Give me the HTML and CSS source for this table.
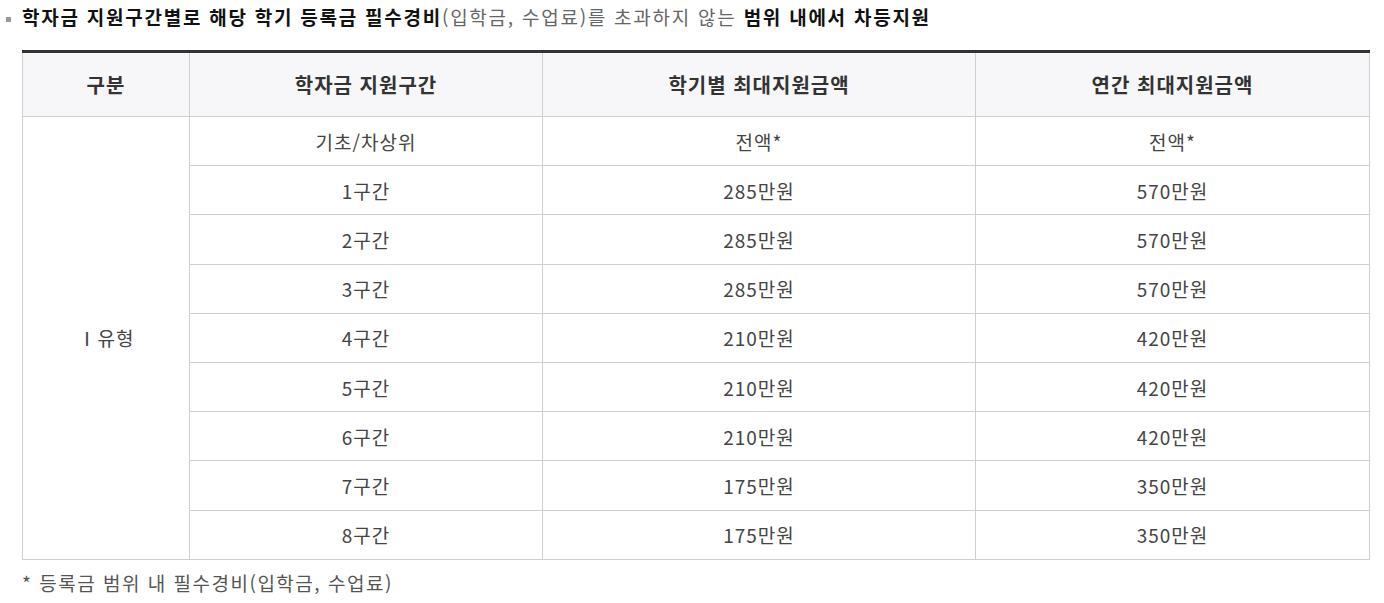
FILE: index.html
```html
<!DOCTYPE html>
<html lang="ko">
<head>
<meta charset="utf-8">
<link rel="stylesheet" href="styles.css">
</head>
<body>
<div class="page">
  <p class="title"><span class="bullet"></span><strong>학자금 지원구간별로 해당 학기 등록금 필수경비</strong>(입학금, 수업료)를 초과하지 않는 <strong>범위 내에서 차등지원</strong></p>
  <table class="tbl">
    <colgroup>
      <col class="c1"><col class="c2"><col class="c3"><col class="c4">
    </colgroup>
    <thead>
      <tr><th>구분</th><th>학자금 지원구간</th><th>학기별 최대지원금액</th><th>연간 최대지원금액</th></tr>
    </thead>
    <tbody>
      <tr><td rowspan="9">Ⅰ유형</td><td>기초/차상위</td><td>전액*</td><td>전액*</td></tr>
      <tr><td>1구간</td><td>285만원</td><td>570만원</td></tr>
      <tr><td>2구간</td><td>285만원</td><td>570만원</td></tr>
      <tr><td>3구간</td><td>285만원</td><td>570만원</td></tr>
      <tr><td>4구간</td><td>210만원</td><td>420만원</td></tr>
      <tr><td>5구간</td><td>210만원</td><td>420만원</td></tr>
      <tr><td>6구간</td><td>210만원</td><td>420만원</td></tr>
      <tr><td>7구간</td><td>175만원</td><td>350만원</td></tr>
      <tr><td>8구간</td><td>175만원</td><td>350만원</td></tr>
    </tbody>
  </table>
  <p class="note">* 등록금 범위 내 필수경비(입학금, 수업료)</p>
</div>
</body>
</html>
```

FILE: styles.css
```css
html, body {
  margin: 0;
  padding: 0;
  background: #fff;
}
body {
  font-family: "Noto Sans CJK KR", "Noto Sans", sans-serif;
  color: #444;
}
.page {
  padding: 4px 16px 0 22px;
}
.title {
  position: relative;
  margin: 0;
  font-size: 19px;
  letter-spacing: 1.75px;
  line-height: 26px;
  color: #666;
}
.title strong {
  color: #111;
  font-weight: 700;
}
.bullet {
  position: absolute;
  left: -16px;
  top: 13px;
  width: 5px;
  height: 5px;
  background: #999;
}
.tbl {
  margin-top: 20px;
  width: 1347px;
  border-collapse: collapse;
  border-top: 3px solid #333;
  table-layout: fixed;
}
.c1 { width: 167px; }
.c2 { width: 353px; }
.c3 { width: 433px; }
.c4 { width: 394px; }
.tbl th, .tbl td {
  border: 1px solid #cfcfcf;
  text-align: center;
  padding: 0;
}
.tbl th {
  height: 63px;
  background: #f7f7f9;
  color: #333;
  font-size: 20px;
  letter-spacing: 1px;
  font-weight: 700;
}
.tbl td {
  height: 48.2px;
  font-size: 19px;
  letter-spacing: 1px;
  color: #444;
}
.note {
  margin: 9px 0 0;
  font-size: 19px;
  letter-spacing: 1.5px;
  color: #555;
}
```
